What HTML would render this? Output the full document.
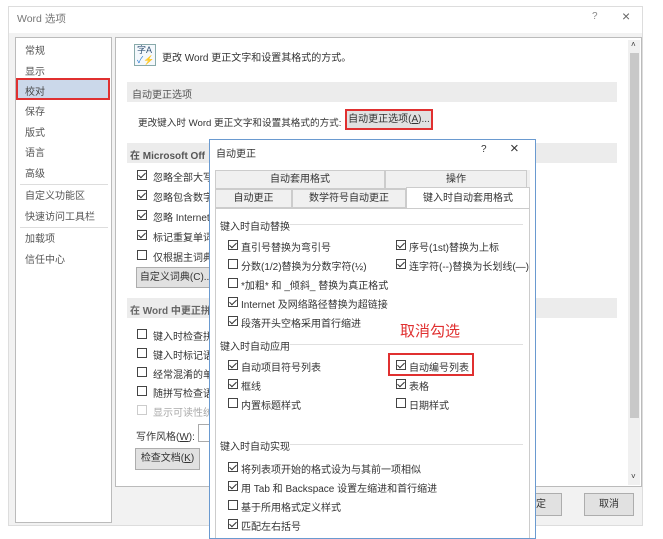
<!DOCTYPE html>
<html><head><meta charset="utf-8"><style>
*{box-sizing:border-box;margin:0;padding:0}
body{width:663px;height:538px;background:#fff;position:relative;overflow:hidden;font-family:"Liberation Sans","Noto Sans CJK SC",sans-serif;font-size:10px;color:#333}
.a{position:absolute;white-space:nowrap}
.cb{position:absolute;width:10px;height:10px;border:1px solid #444;background:#fff}
.cb.c::after{content:"";position:absolute;left:2px;top:0px;width:3px;height:6px;border:solid #333;border-width:0 1.3px 1.3px 0;transform:rotate(45deg)}
.btn{position:absolute;background:#e1e1e1;border:1px solid #adadad;text-align:center}
.sec{position:absolute;background:#ececec;color:#555}
</style></head><body>
<div class="a" style="left:8px;top:6px;width:635px;height:520px;background:#f2f2f2;border:1px solid #ddd"></div>
<div class="a" style="left:9px;top:7px;width:633px;height:26px;background:#fff"></div>
<div class="a" style="left:17px;top:11px;color:#777;font-size:10.5px">Word 选项</div>
<div class="a" style="left:592px;top:11px;color:#888">?</div>
<div class="a" style="left:622px;top:8px;color:#666;font-size:14px">×</div>
<!-- left nav -->
<div class="a" style="left:15px;top:37px;width:97px;height:486px;background:#fff;border:1px solid #bbb"></div>
<div class="a" style="left:25px;top:42px;line-height:20.7px;color:#555">常规<br>显示</div>
<div class="a" style="left:16px;top:78px;width:94px;height:22px;background:#cbd8ea;border:2px solid #e03030"></div>
<div class="a" style="left:25px;top:83px;color:#444">校对</div>
<div class="a" style="left:25px;top:103px;line-height:20.7px;color:#555">保存<br>版式<br>语言<br>高级</div>
<div class="a" style="left:20px;top:184px;width:88px;border-top:1px solid #ddd"></div>
<div class="a" style="left:25px;top:187px;line-height:20.7px;color:#555">自定义功能区<br>快速访问工具栏</div>
<div class="a" style="left:20px;top:227px;width:88px;border-top:1px solid #ddd"></div>
<div class="a" style="left:25px;top:230px;line-height:20.7px;color:#555">加载项<br>信任中心</div>
<!-- right panel -->
<div class="a" style="left:115px;top:37px;width:527px;height:450px;background:#fff;border:1px solid #bbb"></div>
<div class="a" style="left:628px;top:40px;width:12px;height:445px;background:#f0f0f0"></div>
<div class="a" style="left:630px;top:53px;width:9px;height:365px;background:#c8c8c8"></div>
<div class="a" style="left:631px;top:40px;font-size:8px">˄</div>
<div class="a" style="left:631px;top:472px;font-size:8px">˅</div>
<div class="a" style="left:134px;top:44px;width:22px;height:22px;border:1px solid #8aa;background:#f4f8fc;font-size:9px;color:#357;line-height:10px;padding-left:2px">字A<br><span style="color:#2a7ad0">✓</span><span style="color:#e8a020">⚡</span></div>
<div class="a" style="left:162px;top:49px;color:#333">更改 Word 更正文字和设置其格式的方式。</div>
<div class="sec" style="left:127px;top:82px;width:490px;height:20px"></div>
<div class="a" style="left:132px;top:86px;color:#555">自动更正选项</div>
<div class="a" style="left:138px;top:115px;font-size:9.6px">更改键入时 Word 更正文字和设置其格式的方式:</div>
<div class="btn" style="left:345px;top:109px;width:88px;height:21px;border:2px solid #e03030;line-height:17px;color:#333">自动更正选项(<u>A</u>)...</div>
<div class="sec" style="left:127px;top:143px;width:490px;height:20px"></div>
<div class="a" style="left:130px;top:147px;color:#555;font-weight:bold">在 Microsoft Off</div>
<div class="cb c" style="left:137px;top:170px"></div><div class="a" style="left:153px;top:169px">忽略全部大写</div>
<div class="cb c" style="left:137px;top:190px"></div><div class="a" style="left:153px;top:189px">忽略包含数字</div>
<div class="cb c" style="left:137px;top:210px"></div><div class="a" style="left:153px;top:209px">忽略 Internet</div>
<div class="cb c" style="left:137px;top:230px"></div><div class="a" style="left:153px;top:229px">标记重复单词</div>
<div class="cb" style="left:137px;top:250px"></div><div class="a" style="left:153px;top:249px">仅根据主词典</div>
<div class="btn" style="left:136px;top:267px;width:80px;height:21px;line-height:19px">自定义词典(C)...</div>
<div class="sec" style="left:127px;top:298px;width:490px;height:20px"></div>
<div class="a" style="left:130px;top:302px;color:#666;font-weight:bold">在 Word 中更正拼</div>
<div class="cb" style="left:137px;top:329px"></div><div class="a" style="left:153px;top:328px">键入时检查拼</div>
<div class="cb" style="left:137px;top:348px"></div><div class="a" style="left:153px;top:347px">键入时标记语</div>
<div class="cb" style="left:137px;top:367px"></div><div class="a" style="left:153px;top:366px">经常混淆的单</div>
<div class="cb" style="left:137px;top:386px"></div><div class="a" style="left:153px;top:385px">随拼写检查语</div>
<div class="cb" style="left:137px;top:405px;border-color:#ccc"></div><div class="a" style="left:153px;top:404px;color:#aaa">显示可读性统</div>
<div class="a" style="left:136px;top:428px">写作风格(<u>W</u>):</div>
<div class="a" style="left:198px;top:424px;width:14px;height:18px;border:1px solid #aaa"></div>
<div class="btn" style="left:135px;top:448px;width:65px;height:22px;line-height:20px">检查文档(<u>K</u>)</div>
<!-- bottom buttons -->
<div class="btn" style="left:510px;top:493px;width:52px;height:23px;line-height:21px">确定</div>
<div class="btn" style="left:584px;top:493px;width:50px;height:23px;line-height:21px">取消</div>
<!-- autocorrect dialog -->
<div class="a" style="left:209px;top:139px;width:327px;height:400px;background:#fff;border:1px solid #6a9ad0"></div>
<div class="a" style="left:216px;top:145px">自动更正</div>
<div class="a" style="left:481px;top:144px">?</div>
<div class="a" style="left:510px;top:140px;font-size:15px;color:#333">×</div>
<div class="a" style="left:215px;top:170px;width:315px;height:368px;background:#f0f0f0"></div>
<div class="a" style="left:215px;top:170px;width:170px;height:19px;border:1px solid #ccc;background:#f0f0f0;text-align:center;line-height:17px">自动套用格式</div>
<div class="a" style="left:385px;top:170px;width:142px;height:19px;border:1px solid #ccc;background:#f0f0f0;text-align:center;line-height:17px">操作</div>
<div class="a" style="left:215px;top:189px;width:77px;height:19px;border:1px solid #ccc;text-align:center;line-height:17px">自动更正</div>
<div class="a" style="left:292px;top:189px;width:114px;height:19px;border:1px solid #ccc;text-align:center;line-height:17px">数学符号自动更正</div>
<div class="a" style="left:406px;top:187px;width:124px;height:22px;background:#fff;border:1px solid #ccc;border-bottom:none;text-align:center;line-height:21px">键入时自动套用格式</div>
<div class="a" style="left:215px;top:208px;width:315px;height:330px;background:#fff;border:1px solid #ccc;border-bottom:none"></div>
<div class="a" style="left:220px;top:218px">键入时自动替换</div>
<div class="a" style="left:290px;top:224px;width:233px;border-top:1px solid #e0e0e0"></div>
<div class="cb c" style="left:228px;top:240px"></div><div class="a" style="left:241px;top:239px">直引号替换为弯引号</div>
<div class="cb" style="left:228px;top:259px"></div><div class="a" style="left:241px;top:258px">分数(1/2)替换为分数字符(½)</div>
<div class="cb" style="left:228px;top:278px"></div><div class="a" style="left:241px;top:277px">*加粗* 和 _倾斜_ 替换为真正格式</div>
<div class="cb c" style="left:228px;top:297px"></div><div class="a" style="left:241px;top:296px">Internet 及网络路径替换为超链接</div>
<div class="cb c" style="left:228px;top:316px"></div><div class="a" style="left:241px;top:315px">段落开头空格采用首行缩进</div>
<div class="cb c" style="left:396px;top:240px"></div><div class="a" style="left:409px;top:239px">序号(1st)替换为上标</div>
<div class="cb c" style="left:396px;top:259px"></div><div class="a" style="left:409px;top:258px">连字符(--)替换为长划线(—)</div>
<div class="a" style="left:400px;top:320px;color:#e03030;font-size:15px">取消勾选</div>
<div class="a" style="left:220px;top:338px">键入时自动应用</div>
<div class="a" style="left:290px;top:344px;width:233px;border-top:1px solid #e0e0e0"></div>
<div class="cb c" style="left:228px;top:360px"></div><div class="a" style="left:241px;top:359px">自动项目符号列表</div>
<div class="cb c" style="left:228px;top:379px"></div><div class="a" style="left:241px;top:378px">框线</div>
<div class="cb" style="left:228px;top:398px"></div><div class="a" style="left:241px;top:397px">内置标题样式</div>
<div class="a" style="left:388px;top:353px;width:86px;height:23px;border:2px solid #e03030"></div>
<div class="cb c" style="left:396px;top:360px"></div><div class="a" style="left:409px;top:359px">自动编号列表</div>
<div class="cb c" style="left:396px;top:379px"></div><div class="a" style="left:409px;top:378px">表格</div>
<div class="cb" style="left:396px;top:398px"></div><div class="a" style="left:409px;top:397px">日期样式</div>
<div class="a" style="left:220px;top:438px">键入时自动实现</div>
<div class="a" style="left:290px;top:444px;width:233px;border-top:1px solid #e0e0e0"></div>
<div class="cb c" style="left:228px;top:462px"></div><div class="a" style="left:241px;top:461px">将列表项开始的格式设为与其前一项相似</div>
<div class="cb c" style="left:228px;top:481px"></div><div class="a" style="left:241px;top:480px">用 Tab 和 Backspace 设置左缩进和首行缩进</div>
<div class="cb" style="left:228px;top:500px"></div><div class="a" style="left:241px;top:499px">基于所用格式定义样式</div>
<div class="cb c" style="left:228px;top:519px"></div><div class="a" style="left:241px;top:518px">匹配左右括号</div>
</body></html>
